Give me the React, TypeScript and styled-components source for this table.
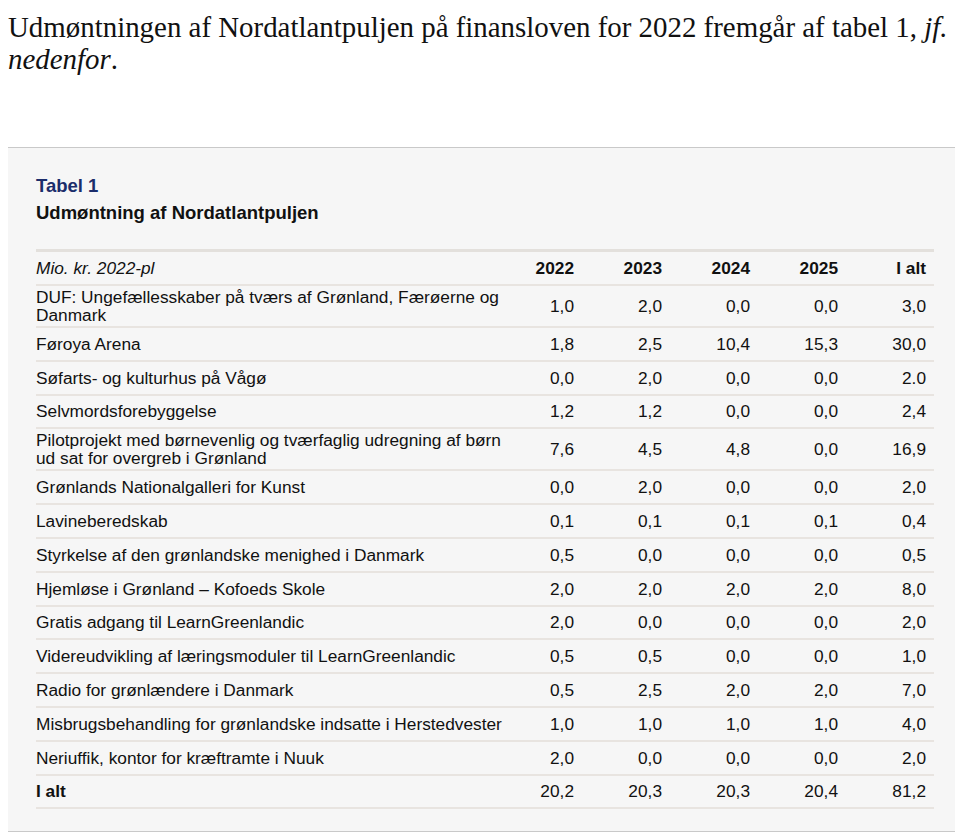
import styled, { createGlobalStyle } from 'styled-components';

const GlobalStyle = createGlobalStyle`
  html, body {
    margin: 0;
    padding: 0;
    background: #ffffff;
  }
`;

const Page = styled.div`
  width: 960px;
  padding: 0 5px 0 8px;
  box-sizing: border-box;
`;

const Intro = styled.p`
  margin: 0;
  padding-top: 11px;
  font-family: 'Liberation Serif', 'Times New Roman', serif;
  font-size: 28.9px;
  line-height: 32px;
  color: #111;
  white-space: nowrap;
`;

const Panel = styled.section`
  margin-top: 72px;
  background: #f6f6f6;
  border-top: 1px solid #c9c9c9;
  border-bottom: 1px solid #c9c9c9;
  padding: 25px 21px 22px 28px;
  font-family: 'Liberation Sans', Arial, sans-serif;
  color: #111;
`;

const TableLabel = styled.div`
  font-size: 18.5px;
  font-weight: bold;
  line-height: 26px;
  color: #1b2d6b;
`;

const TableTitle = styled.div`
  font-size: 18.5px;
  font-weight: bold;
  line-height: 26px;
  margin-top: 1px;
`;

const Table = styled.div`
  margin-top: 23px;
  border-top: 3px solid #e3e0dc;
`;

const Row = styled.div<{ $head?: boolean }>`
  display: grid;
  grid-template-columns: 475px 70px repeat(4, 88px);
  align-items: center;
  min-height: ${({ $head }) => ($head ? 32 : 31.8)}px;
  border-bottom: 2px solid #e8e4e0;
  font-size: 17.3px;
  line-height: 18px;
`;

const Label = styled.div<{ $italic?: boolean; $bold?: boolean }>`
  padding: 2px 0;
  font-style: ${({ $italic }) => ($italic ? 'italic' : 'normal')};
  font-weight: ${({ $bold }) => ($bold ? 'bold' : 'normal')};
`;

const Num = styled.div<{ $bold?: boolean }>`
  text-align: right;
  padding-right: 7px;
  font-weight: ${({ $bold }) => ($bold ? 'bold' : 'normal')};
`;

const years = ['2022', '2023', '2024', '2025', 'I alt'];

const rows: [string, string[]][] = [
  ['DUF: Ungefællesskaber på tværs af Grønland, Færøerne og Danmark', ['1,0', '2,0', '0,0', '0,0', '3,0']],
  ['Føroya Arena', ['1,8', '2,5', '10,4', '15,3', '30,0']],
  ['Søfarts- og kulturhus på Vågø', ['0,0', '2,0', '0,0', '0,0', '2.0']],
  ['Selvmordsforebyggelse', ['1,2', '1,2', '0,0', '0,0', '2,4']],
  ['Pilotprojekt med børnevenlig og tværfaglig udregning af børn ud sat for overgreb i Grønland', ['7,6', '4,5', '4,8', '0,0', '16,9']],
  ['Grønlands Nationalgalleri for Kunst', ['0,0', '2,0', '0,0', '0,0', '2,0']],
  ['Lavineberedskab', ['0,1', '0,1', '0,1', '0,1', '0,4']],
  ['Styrkelse af den grønlandske menighed i Danmark', ['0,5', '0,0', '0,0', '0,0', '0,5']],
  ['Hjemløse i Grønland – Kofoeds Skole', ['2,0', '2,0', '2,0', '2,0', '8,0']],
  ['Gratis adgang til LearnGreenlandic', ['2,0', '0,0', '0,0', '0,0', '2,0']],
  ['Videreudvikling af læringsmoduler til LearnGreenlandic', ['0,5', '0,5', '0,0', '0,0', '1,0']],
  ['Radio for grønlændere i Danmark', ['0,5', '2,5', '2,0', '2,0', '7,0']],
  ['Misbrugsbehandling for grønlandske indsatte i Herstedvester', ['1,0', '1,0', '1,0', '1,0', '4,0']],
  ['Neriuffik, kontor for kræftramte i Nuuk', ['2,0', '0,0', '0,0', '0,0', '2,0']],
];

const total = ['20,2', '20,3', '20,3', '20,4', '81,2'];

export default function App() {
  return (
    <>
      <GlobalStyle />
      <Page>
        <Intro>
          Udmøntningen af Nordatlantpuljen på finansloven for 2022 fremgår af tabel 1, <i>jf.</i>
          <br />
          <i>nedenfor</i>.
        </Intro>
        <Panel>
          <TableLabel>Tabel 1</TableLabel>
          <TableTitle>Udmøntning af Nordatlantpuljen</TableTitle>
          <Table>
            <Row $head>
              <Label $italic>Mio. kr. 2022-pl</Label>
              {years.map((y) => (
                <Num key={y} $bold>
                  {y}
                </Num>
              ))}
            </Row>
            {rows.map(([name, values]) => (
              <Row key={name}>
                <Label>{name}</Label>
                {values.map((v, i) => (
                  <Num key={i}>{v}</Num>
                ))}
              </Row>
            ))}
            <Row>
              <Label $bold>I alt</Label>
              {total.map((v, i) => (
                <Num key={i}>{v}</Num>
              ))}
            </Row>
          </Table>
        </Panel>
      </Page>
    </>
  );
}
